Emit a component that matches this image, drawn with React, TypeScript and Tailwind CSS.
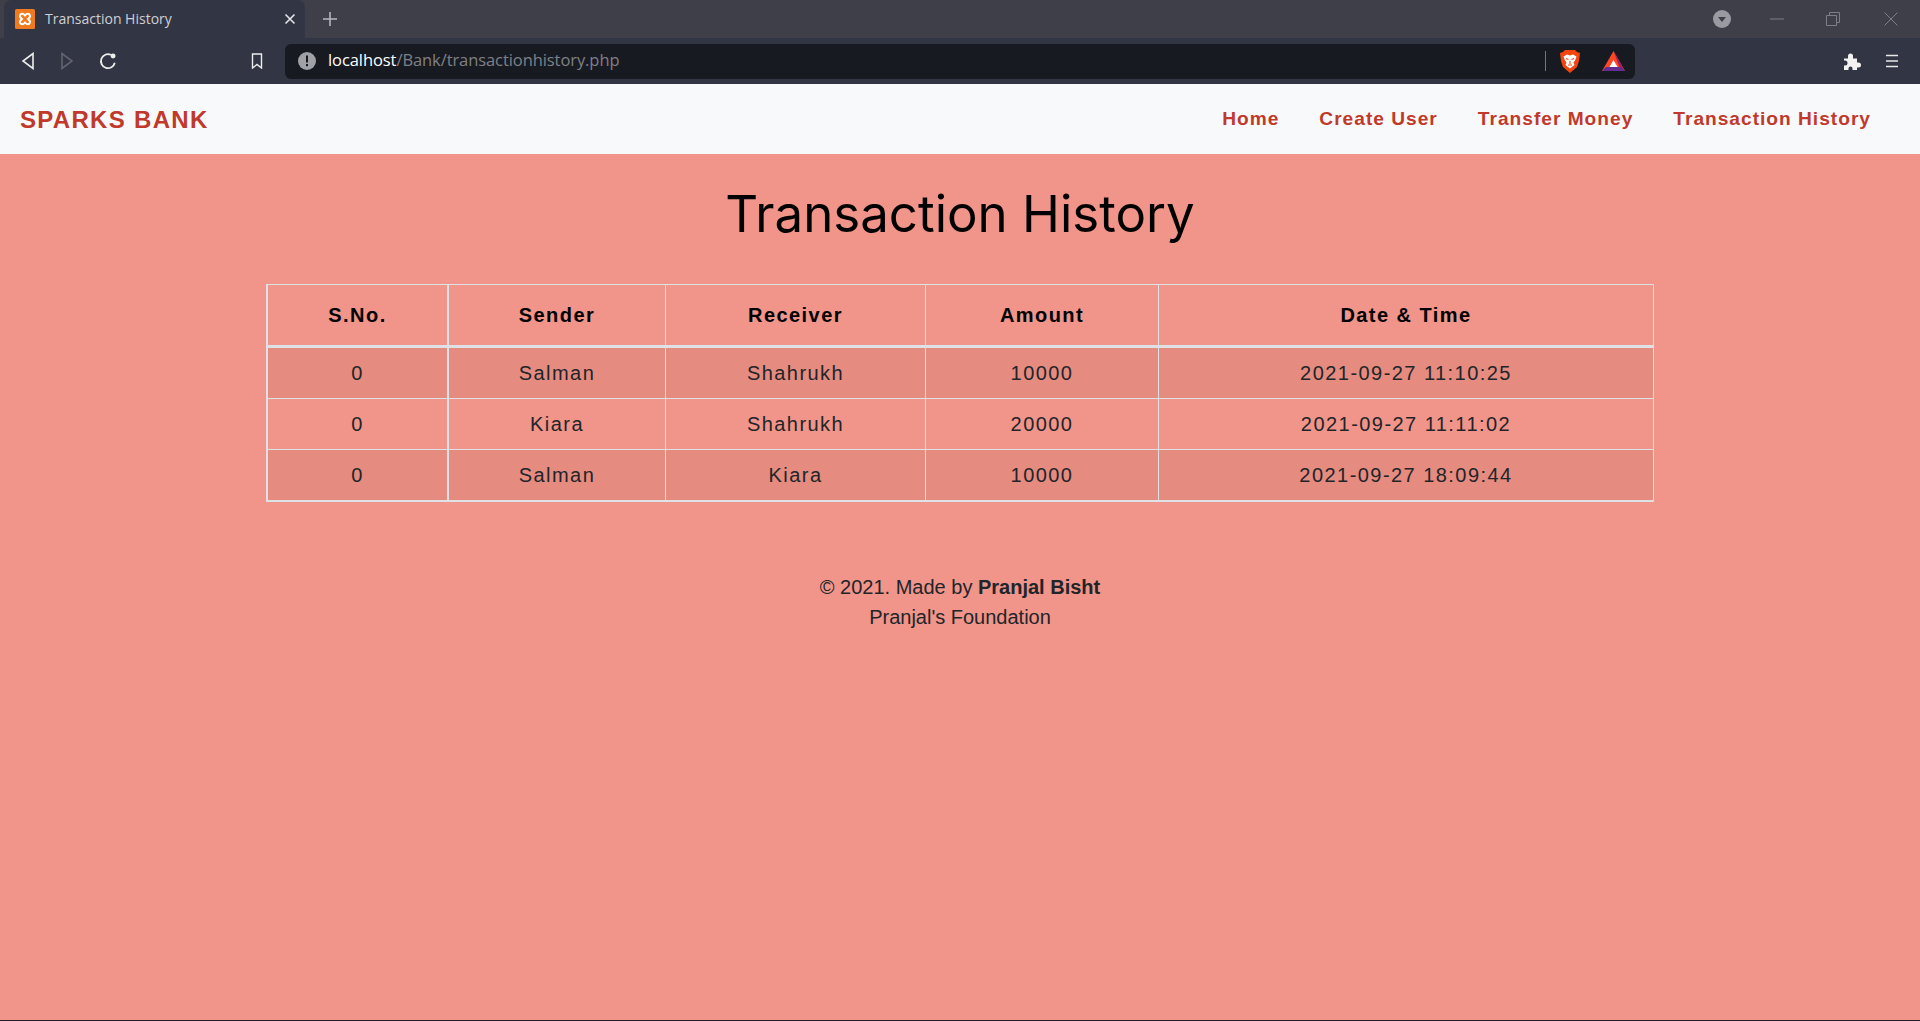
const rows = [
  { sno: 0, sender: "Salman", receiver: "Shahrukh", amount: 10000, date: "2021-09-27 11:10:25" },
  { sno: 0, sender: "Kiara", receiver: "Shahrukh", amount: 20000, date: "2021-09-27 11:11:02" },
  { sno: 0, sender: "Salman", receiver: "Kiara", amount: 10000, date: "2021-09-27 18:09:44" },
];

const navLinks = ["Home", "Create User", "Transfer Money", "Transaction History"];

function BrowserChrome() {
  return (
    <div className="font-['Open_Sans',sans-serif]">
      <div className="h-[38px] bg-[#3f3f49] flex items-stretch text-[#c9cad0]">
        <div className="ml-[4px] w-[301px] h-[38px] bg-[#323543] rounded-t-lg flex items-center pl-[11px] pr-[9px]">
          <svg width="20" height="20" viewBox="0 0 20 20" className="shrink-0">
            <rect width="20" height="20" rx="1.5" fill="#ef7a1f" />
            <path d="M7 10L5.500 8.500a2.300 2.300 0 0 1 1.700-3.800c1.300 0 2 .8 2.800 1.800.8-1 1.500-1.800 2.800-1.800a2.300 2.300 0 0 1 1.700 3.800L13 10l1.500 1.500a2.300 2.300 0 0 1-1.700 3.800c-1.300 0-2-.8-2.800-1.800-.8 1-1.500 1.800-2.800 1.800a2.300 2.300 0 0 1-1.700-3.800z" fill="none" stroke="#fff" strokeWidth="2" />
          </svg>
          <span className="ml-[10px] mb-[2px] text-[14px] text-[#cfd0d6] flex-1">Transaction History</span>
          <svg width="12" height="12" viewBox="0 0 12 12" stroke="#e4e5ea" strokeWidth="1.6">
            <path d="M1.5 1.5l9 9M10.5 1.5l-9 9" />
          </svg>
        </div>
        <div className="ml-[18px] flex items-center">
          <svg width="14" height="14" viewBox="0 0 14 14" stroke="#b5b6bd" strokeWidth="1.6">
            <path d="M7 0v14M0 7h14" />
          </svg>
        </div>
        <div className="ml-auto flex items-center">
          <svg width="18" height="18" viewBox="0 0 18 18">
            <circle cx="9" cy="9" r="9" fill="#9a9ba2" />
            <path d="M5 7h8l-4 5z" fill="#3f3f49" />
          </svg>
          <svg width="14" height="2" viewBox="0 0 14 2" className="ml-[39px]">
            <path d="M0 1h14" stroke="#7d7e86" />
          </svg>
          <svg width="14" height="14" viewBox="0 0 14 14" fill="none" stroke="#7d7e86" className="ml-[42px]">
            <path d="M.5 3.5h10v10H.5zM3.5 3.5v-3h10v10h-3" />
          </svg>
          <svg width="14" height="14" viewBox="0 0 14 14" stroke="#7d7e86" className="ml-[44px] mr-[22px]">
            <path d="M.5.5l13 13M13.5.5l-13 13" />
          </svg>
        </div>
      </div>
      <div className="h-[46px] bg-[#323543] flex items-center">
        <svg width="14" height="18" viewBox="0 0 14 18" fill="none" stroke="#eceded" strokeWidth="1.6" className="ml-[21px]">
          <path d="M12 1.5v15L2 9z" />
        </svg>
        <svg width="14" height="18" viewBox="0 0 14 18" fill="none" stroke="#62646f" strokeWidth="1.6" className="ml-[25px]">
          <path d="M2 1.5v15L12 9z" />
        </svg>
        <svg width="18" height="18" viewBox="0 0 16 16" fill="none" stroke="#eceded" strokeWidth="1.6" className="ml-[25px]">
          <path d="M14 9.5A6.2 6.2 0 1 1 10.5 2.500" />
          <circle cx="12.5" cy="3.5" r="2.2" fill="#eceded" stroke="none" />
        </svg>
        <svg width="12" height="16" viewBox="0 0 12 16" fill="none" stroke="#eceded" strokeWidth="1.4" className="ml-[134px]">
          <path d="M1.5 1h9v14L6 11.5 1.5 15z" />
        </svg>
        <div className="ml-[22px] w-[1350px] h-[35px] rounded-md bg-[#181a21] flex items-center pl-[13px]">
          <svg width="18" height="18" viewBox="0 0 18 18" className="shrink-0">
            <circle cx="9" cy="9" r="9" fill="#a0a1a7" />
            <rect x="8" y="3.5" width="2" height="7" fill="#181a21" />
            <rect x="8" y="12" width="2" height="2.2" fill="#181a21" />
          </svg>
          <span className="ml-[12px] mb-[2px] text-[16.5px] tracking-[-0.08px] text-white">
            localhost<span className="text-[#7f8087]">/Bank/transactionhistory.php</span>
          </span>
          <div className="ml-auto w-px h-[20px] bg-[#75767c]" />
          <svg width="20" height="23" viewBox="0 0 20 23" className="ml-[14px]">
            <path d="M5 0h10l2 2 3 1-1 8-2 6-7 6-7-6-2-6-1-8 3-1z" fill="#f1470f" />
            <path d="M3.500 6.500l3.500-2 3 1 3-1 3.500 2-1.500 4-1.500 2 1 2.500-4.500 3.500-4.500-3.500 1-2.500-1.500-2z" fill="#fff" />
            <path d="M6 8.500l2.500 1M14 8.500l-2.500 1M8 15h4M10 11v3" stroke="#f1470f" strokeWidth="1.1" />
          </svg>
          <svg width="23" height="20" viewBox="0 0 23 20" className="ml-[22px] mr-[10px]">
            <path d="M11.5 0L0 20h23z" fill="#ff4724" />
            <path d="M11.5 0L23 20h-4z" fill="#9e1f63" />
            <path d="M0 20h23l-4-4H4z" fill="#662d91" />
            <path d="M11.5 9l-4 7h8z" fill="#fff" />
          </svg>
        </div>
        <svg width="18" height="18" viewBox="0 0 18 18" fill="#f2f2f2" className="ml-[208px]">
          <path d="M1 6.5h4V4a2.5 2.5 0 0 1 5 0v2.5h4v4h1.500a2.5 2.5 0 0 1 0 5H14V18H9.5v-1.500a2 2 0 0 0-4 0V18H1v-4.500h1a2.5 2.5 0 0 0 0-5H1z" />
        </svg>
        <svg width="12" height="14" viewBox="0 0 12 14" stroke="#e8e8ea" strokeWidth="1.6" className="ml-[25px]">
          <path d="M0 1.5h12M0 7h12M0 12.5h12" />
        </svg>
      </div>
    </div>
  );
}

function Navbar() {
  return (
    <nav className="h-[70px] bg-[#f8f9fa] flex items-center justify-between pt-px pl-[20px] pr-[49px] font-['Liberation_Sans',sans-serif] font-bold text-[#c0392b]">
      <span className="text-[24px] tracking-[1.3px]">SPARKS BANK</span>
      <div className="flex gap-[40px] text-[19.15px] tracking-[1px]">
        {navLinks.map((link) => (
          <span key={link}>{link}</span>
        ))}
      </div>
    </nav>
  );
}

function TransactionTable() {
  const cell = (index: number) =>
    index === 2 ? "border-r border-b-2 border-[#dee2e6]" : "border-r border-b border-[#dee2e6]";

  return (
    <table className="table-fixed border-separate border-spacing-0 w-[1388px] mx-auto font-['Liberation_Sans',sans-serif] text-[20px] tracking-[1.45px] text-center text-[#212529]">
      <colgroup>
        <col className="w-[183px]" />
        <col className="w-[217px]" />
        <col className="w-[260px]" />
        <col className="w-[233px]" />
        <col className="w-[495px]" />
      </colgroup>
      <thead>
        <tr className="h-[64px] font-bold text-black">
          <th className="border-l-2 border-t border-r-2 border-b-[3px] border-[#dee2e6]">S.No.</th>
          <th className="border-t border-r border-b-[3px] border-[#dee2e6]">Sender</th>
          <th className="border-t border-r border-b-[3px] border-[#dee2e6]">Receiver</th>
          <th className="border-t border-r border-b-[3px] border-[#dee2e6]">Amount</th>
          <th className="border-t border-r border-b-[3px] border-[#dee2e6]">Date &amp; Time</th>
        </tr>
      </thead>
      <tbody>
        {rows.map((row, index) => (
          <tr key={index} className={index === 0 ? "h-[51px] bg-[#e58b80]" : index === 1 ? "h-[51px]" : "h-[52px] bg-[#e58b80]"}>
            <td className={`border-l-2 border-r-2 border-[#dee2e6] ${index === 2 ? "border-b-2" : "border-b"}`}>{row.sno}</td>
            <td className={cell(index)}>{row.sender}</td>
            <td className={cell(index)}>{row.receiver}</td>
            <td className={cell(index)}>{row.amount}</td>
            <td className={cell(index)}>{row.date}</td>
          </tr>
        ))}
      </tbody>
    </table>
  );
}

export default function App() {
  return (
    <div className="h-[1021px] overflow-hidden flex flex-col bg-[#f1948a]">
      <BrowserChrome />
      <Navbar />
      <main className="flex-1 border-b border-[#222]">
        <h1 className="mt-[30px] mb-[40px] text-center text-[51px] leading-[60px] text-black font-['Inter',sans-serif]">Transaction History</h1>
        <TransactionTable />
        <footer className="mt-[70px] text-center font-['Liberation_Sans',sans-serif] text-[20px] leading-[30px] text-[#212529]">
          <p>
            © 2021. Made by <b>Pranjal Bisht</b>
          </p>
          <p>Pranjal's Foundation</p>
        </footer>
      </main>
    </div>
  );
}
